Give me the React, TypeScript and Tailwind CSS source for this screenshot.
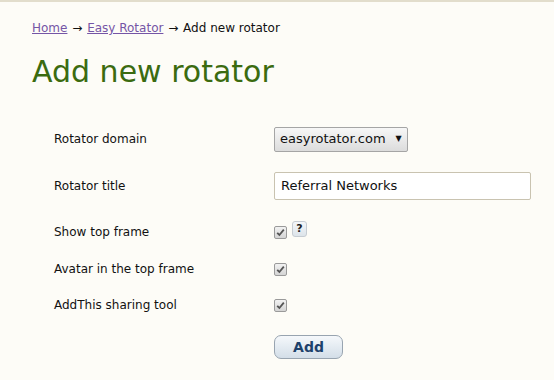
import React from "react";

function Check() {
  return (
    <span className="inline-flex h-[13px] w-[13px] items-center justify-center rounded-[2px] border border-[#9a9a9a] bg-gradient-to-b from-[#f2f2f2] to-[#d4d4d4]">
      <svg width="9" height="9" viewBox="0 0 9 9">
        <path d="M1.2 4.8 L3.4 7 L7.8 1.6" fill="none" stroke="#555" strokeWidth="1.8" />
      </svg>
    </span>
  );
}

function Row({ label, h, children }: { label: string; h: string; children: React.ReactNode }) {
  return (
    <div className={`flex items-center ${h}`}>
      <div className="w-[220px] shrink-0">{label}</div>
      <div className="flex items-center gap-[5px]">{children}</div>
    </div>
  );
}

export default function App() {
  return (
    <div
      className="min-h-screen w-[554px] border-t-2 border-[#e2ddcc] bg-[#fdfcf7] text-[12px] text-[#111]"
      style={{ fontFamily: '"DejaVu Sans", sans-serif' }}
    >
      <div className="px-[32px] pt-[17px]">
        <div className="leading-[18px]">
          <a href="#" className="text-[#7555a6] underline">Home</a>
          <span className="mx-[1px]"> → </span>
          <a href="#" className="text-[#7555a6] underline">Easy Rotator</a>
          <span className="ml-[1px]"> → </span>
          <span className="ml-[1px]">Add new rotator</span>
        </div>
        <h1 className="mt-[16px] text-[30px] leading-[38px] text-[#3b6b10]">Add new rotator</h1>
      </div>

      <div className="mt-[28px] pl-[54px]">
        <Row label="Rotator domain" h="h-[40px]">
          <div className="flex h-[25px] w-[134px] items-center gap-[10px] rounded-[2px] border border-[#a5a5a5] bg-gradient-to-b from-[#f7f7f7] to-[#dcdcdc] pl-[5px] text-[13px] text-[#111]">
            <span>easyrotator.com</span>
            <span className="text-[8px]">▼</span>
          </div>
        </Row>
        <Row label="Rotator title" h="h-[54px]">
          <div className="flex h-[28px] w-[257px] items-center rounded-[2px] border border-[#c9c3b0] bg-white pl-[6px] text-[13px] text-[#111]">
            Referral Networks
          </div>
        </Row>
        <Row label="Show top frame" h="h-[38px]">
          <Check />
          <span className="mb-[6px] inline-flex h-[16px] w-[15px] items-center justify-center rounded-[3px] border border-[#c6ccd2] bg-gradient-to-b from-[#f4f7fa] to-[#dde4ea] text-[11px] font-bold text-[#222]">
            ?
          </span>
        </Row>
        <Row label="Avatar in the top frame" h="h-[36px]">
          <Check />
        </Row>
        <Row label="AddThis sharing tool" h="h-[36px]">
          <Check />
        </Row>
        <div className="flex h-[48px] items-center pl-[220px]">
          <button className="h-[24px] w-[69px] rounded-[7px] border border-[#98a4b0] bg-gradient-to-b from-[#f5f8fb] to-[#d3dee8] text-[14px] font-bold text-[#1d416b]">
            Add
          </button>
        </div>
      </div>
    </div>
  );
}
